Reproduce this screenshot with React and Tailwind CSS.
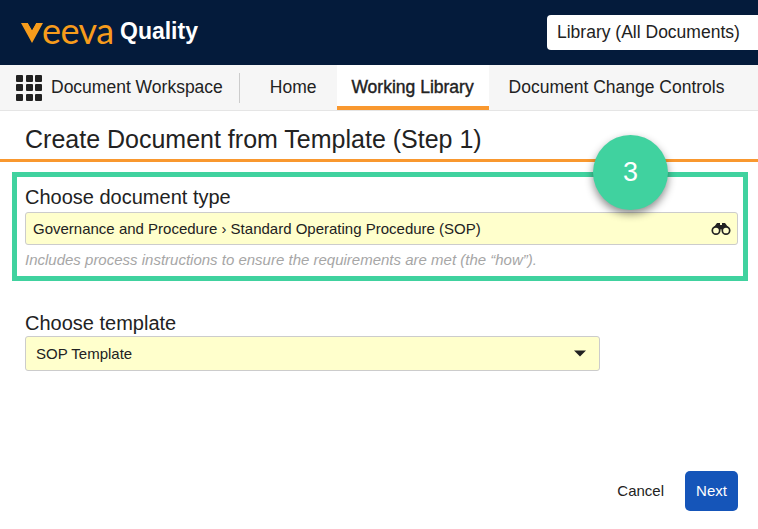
const font = "font-['Liberation_Sans',Arial,sans-serif]";

const GridIcon = () => (
  <div className="grid grid-cols-3 gap-[2.5px] w-[26px] h-[26px]">
    {[...Array(9)].map((_, i) => (
      <div key={i} className="bg-[#222] rounded-[1px]" />
    ))}
  </div>
);

const Binoculars = () => (
  <svg width="20" height="14" viewBox="0 0 20 14" fill="none">
    <path d="M3 5 L6 1 H9 V4 H11 V1 H14 L17 5 Z" fill="#222" />
    <rect x="8" y="3" width="4" height="4.5" fill="#222" />
    <circle cx="5" cy="8.5" r="3.7" stroke="#222" strokeWidth="1.7" />
    <circle cx="15" cy="8.5" r="3.7" stroke="#222" strokeWidth="1.7" />
  </svg>
);

const Logo = () => (
  <div className="flex items-center">
    <svg width="22" height="22" viewBox="0 0 22 22" className="mr-[-1px]">
      <path d="M0 1 H7 L11 8 L15 1 H22 L11 21 Z" fill="#f79c1c" />
      <path d="M7 1 L11 8 L15 1 Z" fill="#041b3b" />
    </svg>
    <span className="font-['Lato',sans-serif] text-[36px] leading-none text-[#f79c1c] w-[73px] mt-[-6px] tracking-[-0.5px]">
      eeva
    </span>
    <span className={`${font} ml-[5px] text-[23px] leading-none font-bold text-white mt-[-2px]`}>
      Quality
    </span>
  </div>
);

export default function App() {
  return (
    <div className={`${font} w-[758px] h-[529px] overflow-hidden bg-white text-[#222] relative`}>
      <header className="h-[65px] bg-[#041b3b] flex items-center justify-between pl-[21px]">
        <Logo />
        <div className="w-[211px] h-[35px] mt-[-1px] bg-white rounded-l-[4px] flex items-center pl-[10px] text-[17.5px] whitespace-nowrap overflow-hidden">
          Library (All Documents)
        </div>
      </header>

      <nav className="h-[46px] bg-[#f6f6f6] border-b border-[#e5e5e5] flex items-center text-[17.5px]">
        <div className="pl-[16px] flex items-center">
          <GridIcon />
          <span className="ml-[9px]">Document Workspace</span>
        </div>
        <div className="w-px h-[30px] bg-[#ccc] ml-[16px]" />
        <span className="ml-[30px]">Home</span>
        <div className="ml-[20px] h-full w-[152px] bg-white border-b-[4px] border-[#f9982f] pt-[4px] flex items-center justify-center">
          <span className="[-webkit-text-stroke:0.4px_#222]">Working Library</span>
        </div>
        <span className="ml-[20px]">Document Change Controls</span>
      </nav>

      <div className="h-[51px] px-[25px] pt-[9px] flex items-center border-b-[3px] border-[#f9982f] text-[25px]">
        Create Document from Template (Step 1)
      </div>

      <section className="mt-[10px] mx-[12px] w-[736px] h-[109px] border-[5px] border-[#40d29f] pl-[8px] pr-[5px] pt-[9px]">
        <div className="text-[20px] leading-[23px]">Choose document type</div>
        <div className="mt-[3px] h-[33px] bg-[#ffffcc] border border-[#ccc] rounded-[3px] pl-[7px] pr-[6px] flex items-center justify-between text-[15px]">
          <span className="pt-[1px]">Governance and Procedure › Standard Operating Procedure (SOP)</span>
          <Binoculars />
        </div>
        <div className="mt-[4px] text-[15px] italic text-[#a6a6a6]">
          Includes process instructions to ensure the requirements are met (the “how”).
        </div>
      </section>

      <section className="mt-[31px] ml-[25px] w-[575px]">
        <div className="text-[20px] leading-[23px]">Choose template</div>
        <div className="mt-[1px] h-[35px] bg-[#ffffcc] border border-[#ccc] rounded-[3px] pl-[10px] pr-[13px] flex items-center justify-between text-[15px]">
          <span className="pt-[1px]">SOP Template</span>
          <svg width="12" height="7" viewBox="0 0 12 7"><path d="M0 0.5 H12 L6 6.5 Z" fill="#222" /></svg>
        </div>
      </section>

      <div className="mt-[100px] pr-[20px] flex items-center justify-end text-[15px]">
        <span className="mr-[21px]">Cancel</span>
        <button className="w-[53px] h-[40px] bg-[#1555b9] text-white rounded-[5px]">Next</button>
      </div>

      <div className="absolute left-[593px] top-[135px] w-[75px] h-[75px] rounded-full bg-[#40d29f] text-white text-[27px] flex items-center justify-center shadow-[0_4px_8px_rgba(0,0,0,0.45)]">
        3
      </div>
    </div>
  );
}
